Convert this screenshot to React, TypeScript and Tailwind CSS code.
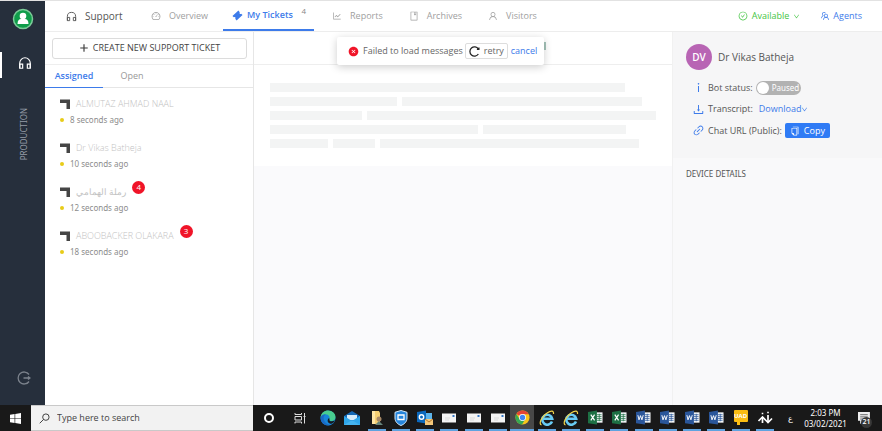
import type { ReactNode } from "react";
import {
  AiFillCloseCircle,
  AiOutlineBook,
  AiOutlineCheckCircle,
  AiOutlineCopy,
  AiOutlineDashboard,
  AiOutlineDown,
  AiOutlineDownload,
  AiOutlineInfo,
  AiOutlineLineChart,
  AiOutlineLink,
  AiOutlinePlus,
  AiOutlineTeam,
  AiOutlineUser,
} from "react-icons/ai";

const tickets = [
  { name: "ALMUTAZ AHMAD NAAL", time: "8 seconds ago", unread: 0 },
  { name: "Dr Vikas Batheja", time: "10 seconds ago", unread: 0 },
  { name: "رملة الهمامي", time: "12 seconds ago", unread: 4 },
  { name: "ABOOBACKER OLAKARA", time: "18 seconds ago", unread: 3 },
];

const skeletonRows = [[92], [33, 62], [24, 75], [54, 37], [15, 11, 67]];

function Headphones({ className }: { className: string }) {
  return (
    <svg viewBox="0 0 24 24" className={className} fill="none" stroke="currentColor" strokeWidth="2" aria-hidden="true">
      <path d="M3 21V12a9 9 0 0 1 18 0v9" />
      <path d="M3 14h5v7H3zM16 14h5v7h-5z" />
    </svg>
  );
}

function TicketIcon() {
  return (
    <svg viewBox="0 0 24 24" className="size-[11px]" fill="currentColor" aria-hidden="true">
      <path d="M14 1l3 4a2 2 0 0 0 3 3l3 3-13 12-3-4a2 2 0 0 0-3-3l-3-3z" />
    </svg>
  );
}

function NavLink({ icon, label }: { icon: ReactNode; label: string }) {
  return (
    <a href="#" className="flex items-center gap-2 text-[#a0a0a0]">
      {icon}
      {label}
    </a>
  );
}

function SideRail() {
  return (
    <aside className="flex w-[45px] shrink-0 flex-col items-center bg-[#262f3c]">
      <button aria-label="Account" className="mt-[7px] size-[22px] rounded-full">
        <svg viewBox="0 0 22 22" className="size-[22px]">
          <circle cx="11" cy="11" r="9.500" fill="#0f9d4a" stroke="#7ccb99" strokeWidth="1.500" />
          <circle cx="11" cy="8" r="3.300" fill="#fff" />
          <path d="M5.500 16c0-3.500 1.500-5 3.500-5h4c2 0 3.500 1.500 3.500 5z" fill="#fff" />
        </svg>
      </button>
      <a href="#" aria-label="Support desk" className="mt-[22px] flex h-[26px] w-full items-center justify-center border-l-2 border-white pb-1 pl-[2px] text-white">
        <Headphones className="size-[14px]" />
      </a>
      <span className="mt-[30px] ml-[3px] rotate-180 font-['Noto_Sans','Open_Sans',sans-serif] text-[8px] leading-3 text-[#959ca6] [writing-mode:vertical-rl]">PRODUCTION</span>
      <button aria-label="Log out" className="mt-auto mb-5 ml-[3px] text-[#7b828c]">
        <svg viewBox="0 0 14 14" className="size-[14px]" fill="none" stroke="currentColor" strokeWidth="1.300">
          <path d="M12 3.500A6 6 0 1 0 12 10.500M6.500 7H13M11 5.500L13 7l-2 1.500" />
        </svg>
      </button>
    </aside>
  );
}

function TopNav() {
  return (
    <header className="flex h-[31px] shrink-0 items-center border-b border-[#ededed] bg-white pr-5 pl-[21px] text-[9px]">
      <span className="flex w-[85px] items-center gap-2 text-[10px] text-[#555]">
        <Headphones className="size-[11px]" />
        Support
      </span>
      <nav className="flex h-full items-center gap-[26px]">
        <NavLink icon={<AiOutlineDashboard className="size-[10px]" />} label="Overview" />
        <a href="#" className="-mr-2 -ml-[11px] flex h-full w-[91px] items-center gap-1 border-b-2 border-[#3d7bea] pl-[9px] font-semibold text-[#3d7bea]">
          <TicketIcon />
          My Tickets
          <span className="mb-2 ml-auto pr-2 text-[8px] font-normal text-[#888]">4</span>
        </a>
        <NavLink icon={<AiOutlineLineChart className="size-[10px]" />} label="Reports" />
        <NavLink icon={<AiOutlineBook className="size-[10px]" />} label="Archives" />
        <NavLink icon={<AiOutlineUser className="size-[10px]" />} label="Visitors" />
      </nav>
      <button className="ml-auto flex items-center gap-1 text-[#45c544]">
        <AiOutlineCheckCircle className="size-[10px]" />
        Available
        <AiOutlineDown className="size-[7px]" />
      </button>
      <a href="#" className="ml-5 flex items-center gap-[3px] text-[#3d7bea]">
        <AiOutlineTeam className="size-[10px]" />
        Agents
      </a>
    </header>
  );
}

function TicketList() {
  return (
    <section aria-label="Tickets" className="flex w-[209px] shrink-0 flex-col border-r border-[#e6e6e6] bg-white">
      <div className="flex h-[33px] items-center border-b border-[#eee] pr-[6px] pl-[7px]">
        <button className="flex h-[21px] w-full items-center justify-center gap-1 rounded-[3px] border border-[#dcdcdc] text-[9px] text-[#444]">
          <AiOutlinePlus className="size-[10px] stroke-[40]" />
          CREATE NEW SUPPORT TICKET
        </button>
      </div>
      <div role="tablist" className="flex h-[23px] border-b border-[#e6e6e6] text-[9px]">
        <button role="tab" aria-selected="true" className="-mb-px w-[58px] border-b border-[#3d7bea] font-semibold text-[#3d7bea]">Assigned</button>
        <button role="tab" aria-selected="false" className="w-[58px] text-[#999]">Open</button>
      </div>
      <ul className="pt-[7px] pl-[15px]">
        {tickets.map((t) => (
          <li key={t.name} className="h-11">
            <div className="flex h-[18px] items-center text-[9px] text-[#c2c2c2]">
              <svg viewBox="0 0 10 10" className="mr-[6px] size-[10px]" aria-hidden="true">
                <path d="M0 .5h10V10H6.500V4H0z" fill="#454545" />
              </svg>
              <span className="font-light">{t.name}</span>
              {t.unread > 0 && (
                <span className="mb-[10px] ml-[6px] flex size-[13px] items-center justify-center rounded-full bg-[#f01428] text-[8px] text-white">{t.unread}</span>
              )}
            </div>
            <div className="flex h-[14px] items-center font-['Noto_Sans','Open_Sans',sans-serif] text-[8px] text-[#8c8c8c]">
              <span className="mr-[6px] size-1 rounded-full bg-[#e8cc18]" />
              {t.time}
            </div>
          </li>
        ))}
      </ul>
    </section>
  );
}

function Toast() {
  return (
    <div role="alert" className="absolute top-[5px] left-[83px] z-10 flex h-[28px] w-[207px] items-center rounded-[2px] bg-white pl-[11px] text-[9px] text-[#666] shadow-[0_2px_8px_rgba(0,0,0,0.200)]">
      <AiFillCloseCircle className="mr-1 size-[11px] text-[#f01428]" />
      Failed to load messages
      <button className="ml-[2px] flex h-4 w-[43px] items-center justify-center gap-1 rounded-[2px] border border-[#ddd]">
        <svg viewBox="0 0 12 12" className="size-[11px]" fill="none" stroke="#222" strokeWidth="1.400" aria-hidden="true">
          <path d="M10.200 8.700A5 5 0 1 1 10.200 3.300M10.800 1.500v2.200H8.600" />
        </svg>
        retry
      </button>
      <button className="ml-[3px] text-[#3d7bea]">cancel</button>
    </div>
  );
}

function Conversation() {
  return (
    <main className="relative flex min-w-0 flex-1 flex-col bg-[#fafafc]">
      <div className="flex h-[33px] shrink-0 items-center border-b border-[#eee] bg-white">
        <span className="mb-1 ml-[290px] h-2 w-[2px] bg-[#a5c4ba]" />
      </div>
      <Toast />
      <div aria-label="Loading messages" className="flex flex-col gap-[5px] bg-white px-4 pt-[18px] pb-[18px]">
        {skeletonRows.map((row, i) => (
          <div key={i} className="flex gap-[5px]">
            {row.map((w, j) => (
              <span key={j} className="h-[9px] bg-[#f3f4f4]" style={{ width: `${w}%` }} />
            ))}
          </div>
        ))}
      </div>
    </main>
  );
}

function DetailsPanel() {
  return (
    <aside className="w-[210px] shrink-0 border-l border-[#f1f1f1] bg-[#f9f9fa] text-[9px] text-[#555]">
      <div className="h-[126px] bg-[#f6f6f7] px-[13px] pt-3">
        <div className="flex items-center gap-[6px] text-[10px]">
          <span className="flex size-[26px] items-center justify-center rounded-full bg-[#b865b4] font-semibold text-white">DV</span>
          Dr Vikas Batheja
        </div>
        <div className="mt-[7px] flex flex-col pl-[6px]">
          <div className="flex h-[21px] items-center">
            <AiOutlineInfo className="mr-[3px] size-[13px] text-[#3d7bea]" />
            <span id="bot-status">Bot status:</span>
            <button role="switch" aria-checked="false" aria-labelledby="bot-status" className="ml-[3px] flex h-[14px] w-[45px] items-center gap-[3px] rounded-full bg-[#b2b2b2] pl-px font-['Noto_Sans','Open_Sans',sans-serif] text-[8px] text-white">
              <span className="size-3 rounded-full bg-white" />
              Paused
            </button>
          </div>
          <div className="flex h-[22px] items-center">
            <AiOutlineDownload className="mr-[3px] size-[13px] text-[#3d7bea]" />
            Transcript:
            <button className="ml-[6px] flex items-center text-[#3d7bea]">
              Download
              <AiOutlineDown className="size-[7px]" />
            </button>
          </div>
          <div className="flex h-[21px] items-center">
            <AiOutlineLink className="mr-[3px] size-[13px] text-[#3d7bea]" />
            Chat URL (Public):
            <button className="ml-[3px] flex h-[15px] w-[45px] items-center justify-center gap-1 rounded-[2px] bg-[#2f7bf5] text-white">
              <AiOutlineCopy className="size-[10px]" />
              Copy
            </button>
          </div>
        </div>
      </div>
      <h2 className="mt-[10px] px-[13px] font-['Noto_Sans','Open_Sans',sans-serif] text-[8px] leading-3">DEVICE DETAILS</h2>
    </aside>
  );
}

function Edge() {
  return (
    <svg viewBox="0 0 16 16" className="size-4">
      <circle cx="8" cy="8" r="7.500" fill="#1686d9" />
      <path d="M.5 7.500C1 3 4.500.5 8 .5c4.500 0 7.500 3 7.500 6.500 0 2.500-1.800 4-4.200 4-1.800 0-2.500-.8-1.800-2C10 7 9 4.500 6 4.500c-2.500 0-4.800 1-5.500 3z" fill="#48cd8f" />
      <path d="M.5 7.500C2 4.700 4 4 6 4.500c-2 .7-3 3-2 5.500.8 2.500 3 4.500 6 5A7.500 7.500 0 0 1 .5 7.500z" fill="#1a69c4" />
      <path d="M9.500 9c-.5 1.500.5 2.300 2 2.300 1.300 0 2.400-.4 3.300-1-1 3-3 4-5 3.200C7.300 12.500 7 10 9 8z" fill="#161a20" />
    </svg>
  );
}

function MailApp() {
  return (
    <svg viewBox="0 0 16 16" className="size-4">
      <path d="M0 6l8-5 8 5v9H0z" fill="#1467b3" />
      <path d="M3 5h10v5H3z" fill="#d6ecfa" />
      <path d="M0 6l8 5 8-5v9H0z" fill="#2fa6ea" />
      <path d="M0 15l8-5 8 5z" fill="#45b4f0" />
    </svg>
  );
}

function FolderApp() {
  return (
    <svg viewBox="0 0 16 16" className="size-4">
      <path d="M3 1h7l1 2v11H3z" fill="#f5cf72" />
      <path d="M3 1h3v13H3z" fill="#ffe6a5" />
      <circle cx="10" cy="9" r="2.500" fill="#a98a68" />
      <path d="M6 15l4-4 4 4z" fill="#67847b" />
    </svg>
  );
}

function ShieldApp() {
  return (
    <svg viewBox="0 0 16 16" className="size-4">
      <path d="M8 .5l6 1.800V8c0 4-3 6.300-6 7.500C5 14.300 2 12 2 8V2.300z" fill="#2585dc" stroke="#d6eafa" />
      <path d="M5 5h6v4.500H5z" fill="none" stroke="#fff" strokeWidth="1.300" />
    </svg>
  );
}

function OutlookApp() {
  return (
    <svg viewBox="0 0 16 16" className="size-4">
      <path d="M8 3h7v7H8z" fill="#5db4ea" />
      <path d="M0 2l9-1.500v13L0 12z" fill="#0a68bd" />
      <circle cx="4.500" cy="7" r="2.200" fill="none" stroke="#fff" strokeWidth="1.400" />
      <path d="M8 9h8v6H8z" fill="#f4c77a" />
      <path d="M8 9l4 3 4-3" fill="none" stroke="#b5762c" />
    </svg>
  );
}

function EnvelopeWindow() {
  return (
    <svg viewBox="0 0 16 16" className="size-4">
      <path d="M1 3.500h14v9H1z" fill="#f4f4f4" />
      <path d="M11.500 5h2v2h-2z" fill="#3477c6" />
      <path d="M4 8h5M4 10h4" stroke="#ccc" strokeWidth=".6" />
    </svg>
  );
}

function Chrome() {
  return (
    <svg viewBox="0 0 16 16" className="size-[15px]">
      <circle cx="8" cy="8" r="7.500" fill="#f8c51b" />
      <path d="M8 8L1.500 4.200A7.500 7.500 0 0 1 14.600 4.500H8z" fill="#e54335" />
      <path d="M1.500 4.200A7.500 7.500 0 0 0 7.500 15.500L11 9.700 8 8 4.800 9.700z" fill="#36a853" />
      <circle cx="8" cy="8" r="3.700" fill="#fff" />
      <circle cx="8" cy="8" r="2.900" fill="#4285f4" />
    </svg>
  );
}

function Explorer() {
  return (
    <svg viewBox="0 0 16 16" className="size-4" fill="none">
      <path d="M13 11.500A5 5 0 1 1 13.200 8.700H4" stroke="#68cbf4" strokeWidth="2.600" />
      <path d="M2.500 15C-1 14 3 6 8 3c4-2.600 7-2.600 6.500 1" stroke="#f2d449" strokeWidth="1.200" />
    </svg>
  );
}

function OfficeApp({ kind }: { kind: "X" | "W" }) {
  const fill = kind === "X" ? "#1d7044" : "#2a569a";
  return (
    <svg viewBox="0 0 16 16" className="size-[15px]">
      <path d="M8 2.500h7.500v11H8z" fill="#f3f6f8" />
      <path d="M9.500 5h5M9.500 7h5M9.500 9h5M9.500 11h5M12 4v8" stroke={fill} strokeWidth=".8" />
      <path d="M0 2l9.500-1.500v15L0 14z" fill={fill} />
      {kind === "X" ? (
        <path d="M3 5l4 6M7 5l-4 6" stroke="#fff" strokeWidth="1.300" />
      ) : (
        <path d="M2 5.500l1.200 5L4.800 6l1.500 4.500L7.700 5.500" fill="none" stroke="#fff" />
      )}
    </svg>
  );
}

function ChatApp() {
  return (
    <span className="relative mb-[3px] flex h-3 w-[14px] items-center justify-center rounded-[1px] bg-[#fbbd12] text-[6px] font-bold text-white">
      UAD
      <span className="absolute -bottom-[3px] left-[3px] size-[3px] bg-[#fbbd12]" />
    </span>
  );
}

function ArrowsApp() {
  return (
    <svg viewBox="0 0 16 16" className="size-4" fill="none" stroke="#fff" strokeWidth="1.700">
      <path d="M1.500 11L5.500 7l4.500 4.500 1 1 4-4" />
      <path d="M5.500 7v6M11 12V5" />
      <path d="M4.700 3.500h1.600M10.200 2.500h1.600" />
    </svg>
  );
}

const apps: { name: string; icon: ReactNode; open?: boolean; active?: boolean }[] = [
  { name: "Edge", icon: <Edge /> },
  { name: "Mail", icon: <MailApp /> },
  { name: "Files", icon: <FolderApp />, open: true },
  { name: "Security", icon: <ShieldApp />, open: true },
  { name: "Outlook", icon: <OutlookApp />, open: true },
  { name: "Message 1", icon: <EnvelopeWindow />, open: true },
  { name: "Message 2", icon: <EnvelopeWindow />, open: true },
  { name: "Message 3", icon: <EnvelopeWindow />, open: true },
  { name: "Chrome", icon: <Chrome />, open: true, active: true },
  { name: "Explorer 1", icon: <Explorer />, open: true },
  { name: "Explorer 2", icon: <Explorer />, open: true },
  { name: "Excel 1", icon: <OfficeApp kind="X" />, open: true },
  { name: "Excel 2", icon: <OfficeApp kind="X" />, open: true },
  { name: "Word 1", icon: <OfficeApp kind="W" />, open: true },
  { name: "Word 2", icon: <OfficeApp kind="W" />, open: true },
  { name: "Word 3", icon: <OfficeApp kind="W" />, open: true },
  { name: "Word 4", icon: <OfficeApp kind="W" />, open: true },
  { name: "Chat", icon: <ChatApp />, open: true },
  { name: "Transfer", icon: <ArrowsApp />, open: true },
];

function Taskbar() {
  return (
    <footer className="flex h-[26px] shrink-0 bg-[#191919] text-white">
      <button aria-label="Start" className="flex w-[31px] items-center justify-center">
        <svg viewBox="0 0 12 12" className="size-[11px]" fill="#fff">
          <path d="M0 1.800l5-.7v4.500H0zM5.700 1L12 0v5.600H5.700zM0 6.300h5v4.600l-5-.7zM5.700 6.300H12V12l-6.300-1z" />
        </svg>
      </button>
      <label className="flex w-[222px] items-center gap-[7px] border-y border-[#c9c9c9] bg-[#f2f2f2] pl-2">
        <svg viewBox="0 0 12 12" className="size-[11px]" fill="none" stroke="#333" aria-hidden="true">
          <circle cx="7.500" cy="4.500" r="3.500" />
          <path d="M5 7L.8 11.200" />
        </svg>
        <input aria-label="Search" placeholder="Type here to search" className="min-w-0 flex-1 bg-transparent text-[9px] text-[#333] outline-none placeholder:text-[#444]" />
      </label>
      <button aria-label="Cortana" className="flex w-[31px] items-center justify-center">
        <span className="size-[10px] rounded-full border-2 border-white" />
      </button>
      <button aria-label="Task view" className="flex w-[32px] items-center justify-center">
        <svg viewBox="0 0 12 12" className="size-3" fill="none" stroke="#ddd">
          <path d="M1 1v1.500h6.500V1M1 4.500h6.500v3.500H1zM1 11.500V10h6.500v1.500M10.500 1v10.500M9.500 4.500h2" />
        </svg>
      </button>
      <div className="flex min-w-0 flex-1">
        {apps.map((app) => (
          <button
            key={app.name}
            aria-label={app.name}
            className={`flex min-w-0 flex-1 flex-col items-center ${app.active ? "bg-[#484848]" : ""}`}
          >
            <span className="flex flex-1 items-center pt-px">{app.icon}</span>
            <span className={`h-[2px] ${app.active ? "w-full" : "w-[18px]"} ${app.open ? "bg-[#5fa3e0]" : ""}`} />
          </button>
        ))}
      </div>
      <span className="flex w-[27px] items-center justify-center text-[8px]">ع</span>
      <div className="flex w-[43px] flex-col justify-center text-center font-['Noto_Sans','Open_Sans',sans-serif] text-[8px] leading-[11px] whitespace-nowrap">
        <span>2:03 PM</span>
        <span>03/02/2021</span>
      </div>
      <button aria-label="21 notifications" className="relative flex w-[35px] items-center justify-center">
        <svg viewBox="0 0 12 12" className="size-[13px]">
          <path d="M0 0h11v8H5l-3 3V8H0z" fill="#eee" />
          <path d="M2 2.500h7M2 4.500h7M2 6.500h4" stroke="#555" strokeWidth=".8" />
        </svg>
        <span className="absolute right-[10px] bottom-[3px] flex size-[11px] items-center justify-center rounded-full bg-[#383838] text-[7px] font-semibold">21</span>
      </button>
    </footer>
  );
}

export default function App() {
  return (
    <div className="flex h-screen flex-col overflow-hidden border-t border-[#e2e2e2] bg-white font-['Open_Sans','Noto_Sans','DejaVu_Sans',sans-serif]">
      <div className="flex min-h-0 flex-1">
        <SideRail />
        <div className="flex min-w-0 flex-1 flex-col">
          <TopNav />
          <div className="flex min-h-0 flex-1">
            <TicketList />
            <Conversation />
            <DetailsPanel />
          </div>
        </div>
      </div>
      <Taskbar />
    </div>
  );
}
